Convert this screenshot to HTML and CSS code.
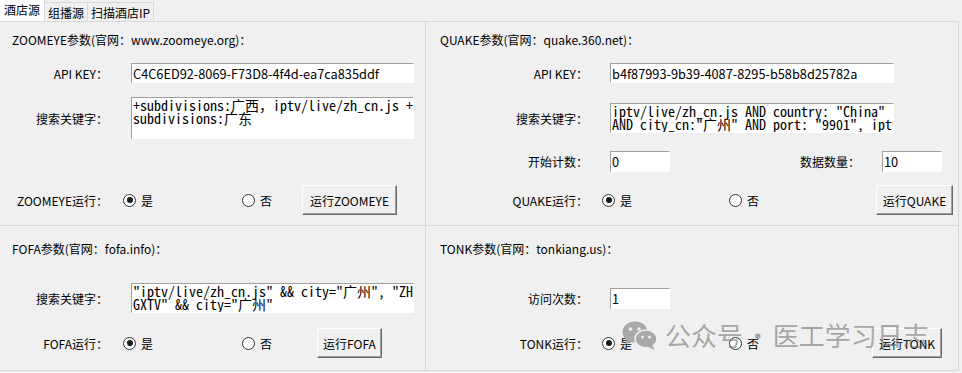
FILE: index.html
```html
<!DOCTYPE html>
<html>

<head>
    <meta charset="UTF-8">
    <title>酒店源</title>
    <link rel="stylesheet" href="styles.css">
</head>

<body>
    <div class="tabs">
        <div class="tab active">酒店源</div>
        <div class="tab">组播源</div>
        <div class="tab">扫描酒店IP</div>
    </div>

    <main class="pane">
        <!-- ZOOMEYE -->
        <section class="group top left">
            <div class="title">ZOOMEYE参数(官网：www.zoomeye.org)：</div>
            <div class="field r-key">
                <span class="label">API KEY：</span>
                <input class="entry" value="C4C6ED92-8069-F73D8-4f4d-ea7ca835ddf">
            </div>
            <div class="field r-search">
                <span class="label">搜索关键字：</span>
                <textarea class="text tall" wrap="off">+subdivisions:广西，iptv/live/zh_cn.js +
subdivisions:广东</textarea>
            </div>
            <div class="count r-count"></div>
            <div class="run r-run">
                <span class="label">ZOOMEYE运行：</span>
                <span class="radio yes on"><i></i>是</span>
                <span class="radio no"><i></i>否</span>
                <button class="btn btn-zoomeye">运行ZOOMEYE</button>
            </div>
        </section>

        <!-- QUAKE -->
        <section class="group top right">
            <div class="title">QUAKE参数(官网：quake.360.net)：</div>
            <div class="field r-key">
                <span class="label">API KEY：</span>
                <input class="entry" value="b4f87993-9b39-4087-8295-b58b8d25782a">
            </div>
            <div class="field r-search">
                <span class="label">搜索关键字：</span>
                <textarea class="text" wrap="off">iptv/live/zh_cn.js AND country: "China"
AND city_cn:"广州" AND port: "9901", iptv/live/zh_cn.js</textarea>
            </div>
            <div class="count r-count">
                <span class="label">开始计数：</span>
                <input class="entry" value="0">
                <span class="label">数据数量：</span>
                <input class="entry" value="10">
            </div>
            <div class="run r-run">
                <span class="label">QUAKE运行：</span>
                <span class="radio yes on"><i></i>是</span>
                <span class="radio no"><i></i>否</span>
                <button class="btn btn-quake">运行QUAKE</button>
            </div>
        </section>

        <!-- FOFA -->
        <section class="group bottom left fofa">
            <div class="title">FOFA参数(官网：fofa.info)：</div>
            <div class="field r-search">
                <span class="label">搜索关键字：</span>
                <textarea class="text" wrap="off">"iptv/live/zh_cn.js" &amp;&amp; city="广州", "ZH
GXTV" &amp;&amp; city="广州"</textarea>
            </div>
            <div class="run r-run">
                <span class="label">FOFA运行：</span>
                <span class="radio yes on"><i></i>是</span>
                <span class="radio no"><i></i>否</span>
                <button class="btn btn-fofa">运行FOFA</button>
            </div>
        </section>

        <!-- TONK -->
        <section class="group bottom right tonk">
            <div class="title">TONK参数(官网：tonkiang.us)：</div>
            <div class="count r-search">
                <span class="label">访问次数：</span>
                <input class="entry" value="1">
            </div>
            <div class="run r-run">
                <span class="label">TONK运行：</span>
                <span class="radio yes on"><i></i>是</span>
                <span class="radio no"><i></i>否</span>
                <button class="btn btn-tonk">运行TONK</button>
            </div>
        </section>
    </main>

    <div class="watermark">
        <svg width="36" height="30" viewBox="0 0 36 30">
            <ellipse cx="13" cy="12" rx="12.5" ry="10.5" fill="#a9a9a9" />
            <path d="M5 19 L3 25 L10 21 Z" fill="#a9a9a9" />
            <circle cx="8.5" cy="9" r="1.8" fill="#f0f0f0" />
            <circle cx="17" cy="9" r="1.8" fill="#f0f0f0" />
            <ellipse cx="24" cy="19" rx="11" ry="9" fill="#a9a9a9" stroke="#f0f0f0" stroke-width="1.5" />
            <path d="M30 25 L33 30 L26 27 Z" fill="#a9a9a9" />
            <circle cx="20.5" cy="17" r="1.5" fill="#f0f0f0" />
            <circle cx="27.5" cy="17" r="1.5" fill="#f0f0f0" />
        </svg>
        <span>公众号 · 医工学习日志</span>
    </div>
</body>

</html>
```

FILE: styles.css
```css
body {
    margin: 0;
    width: 962px;
    height: 373px;
    overflow: hidden;
    position: relative;
    background: #f0f0f0;
    font-family: "Noto Sans CJK SC", sans-serif;
    font-size: 12px;
    color: #000;
}

.tabs {
    display: flex;
    align-items: flex-end;
    height: 21px;
}

.tab {
    height: 19px;
    line-height: 19px;
    padding: 0 3px;
    border-right: 1px solid #d9d9d9;
    border-top: 1px solid #d9d9d9;
    box-sizing: border-box;
}

.tab.active {
    height: 21px;
    line-height: 20px;
    padding: 0 4px;
    background: #fff;
    border-top: none;
}

.pane {
    display: grid;
    grid-template-columns: 426px 532px;
    grid-template-rows: 204px 144px;
    width: 959px;
    box-sizing: border-box;
    border-top: 1px solid #d9d9d9;
    border-right: 1px solid #d9d9d9;
    border-bottom: 1px solid #d9d9d9;
}

.group {
    box-sizing: border-box;
}

.group.left {
    border-right: 1px solid #d9d9d9;
}

.group.top {
    border-bottom: 1px solid #d9d9d9;
    padding-top: 10px;
}

.group.bottom {
    padding-top: 15px;
}

.title {
    line-height: 16px;
    padding-left: 12px;
}

.group.right .title {
    padding-left: 14px;
}

.label {
    text-align: right;
    white-space: nowrap;
}

.field {
    display: grid;
    grid-template-columns: 108px 283px;
    column-gap: 23px;
    align-items: center;
}

.group.right .field {
    grid-template-columns: 162px 284px;
    column-gap: 22px;
}

.count {
    display: grid;
    grid-template-columns: 162px 60px 168px 60px;
    column-gap: 22px;
    align-items: center;
    height: 21px;
}

.r-key {
    margin-top: 15px;
    height: 20px;
}

.r-search {
    margin-top: 14px;
    height: 42px;
}

.r-count {
    margin-top: 12px;
}

.r-run {
    margin-top: 13px;
}

.group.bottom .r-search {
    margin-top: 26px;
    height: 30px;
}

.group.bottom .r-run {
    margin-top: 15px;
}

.entry,
.text {
    box-sizing: border-box;
    margin: 0;
    background: #fff;
    border: 1px solid;
    border-color: #a0a0a0 #fff #fff #a0a0a0;
    outline: none;
    color: #000;
}

.entry {
    height: 21px;
    width: 100%;
    padding: 0 1px;
    font-family: inherit;
    font-size: 12.75px;
    line-height: 18px;
}

.r-key .entry {
    height: 20px;
}

.text {
    width: 100%;
    height: 30px;
    padding: 1px 1px 0;
    resize: none;
    overflow: hidden;
    white-space: pre;
    font-family: "Noto Sans Mono CJK SC", "Liberation Mono", monospace;
    font-size: 14px;
    font-weight: 300;
    line-height: 13px;
}

.text.tall {
    height: 42px;
}

.run {
    display: flex;
    align-items: center;
    height: 30px;
}

.run .label {
    width: 108px;
}

.radio {
    display: flex;
    align-items: center;
    gap: 5px;
}

.radio i {
    position: relative;
    width: 13px;
    height: 13px;
    box-sizing: border-box;
    border: 1px solid #333;
    border-radius: 50%;
    background: #fff;
}

.radio.on i::after {
    content: "";
    position: absolute;
    left: 2.5px;
    top: 2.5px;
    width: 6px;
    height: 6px;
    border-radius: 50%;
    background: #1a1a1a;
}

.run .yes {
    margin-left: 15px;
    width: 119px;
}

.run .no {
    width: 60px;
}

.fofa .run .no {
    width: 75px;
}

.group.right .run .label {
    width: 162px;
}

.group.right .run .yes {
    margin-left: 14px;
    width: 127px;
}

.group.right .run .no {
    width: 147px;
}

.group.right.tonk .run .no {
    width: 143px;
}

.btn {
    height: 30px;
    padding: 0;
    margin: 0;
    font-family: inherit;
    font-size: 12px;
    color: #000;
    background: #f0f0f0;
    border: 1px solid;
    border-color: #fff #696969 #696969 #fff;
    box-shadow: inset -1px -1px #a0a0a0;
}

.btn-zoomeye {
    width: 95px;
}

.btn-quake {
    width: 77px;
}

.btn-fofa {
    width: 65px;
}

.btn-tonk {
    width: 70px;
}

.watermark {
    position: absolute;
    left: 622px;
    top: 316px;
    display: flex;
    align-items: center;
    gap: 7px;
    color: rgba(100, 100, 100, 0.55);
    font-family: "Noto Sans CJK SC", sans-serif;
    font-size: 26px;
    word-spacing: -4px;
    pointer-events: none;
}
```
